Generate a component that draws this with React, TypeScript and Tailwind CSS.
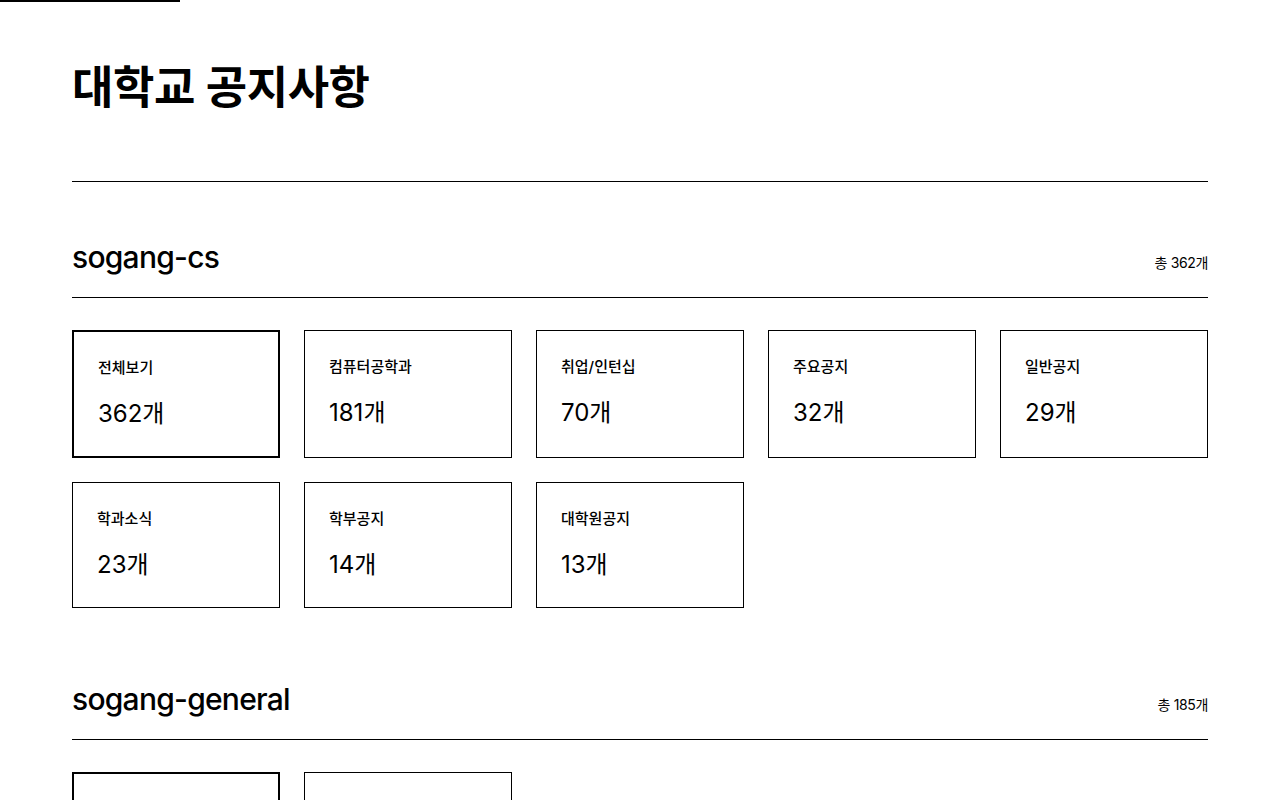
import React from "react";

type Category = { name: string; count: number };

type Source = { id: string; total: number; categories: Category[] };

const sources: Source[] = [
  {
    id: "sogang-cs",
    total: 362,
    categories: [
      { name: "전체보기", count: 362 },
      { name: "컴퓨터공학과", count: 181 },
      { name: "취업/인턴십", count: 70 },
      { name: "주요공지", count: 32 },
      { name: "일반공지", count: 29 },
      { name: "학과소식", count: 23 },
      { name: "학부공지", count: 14 },
      { name: "대학원공지", count: 13 },
    ],
  },
  {
    id: "sogang-general",
    total: 185,
    categories: [
      { name: "전체보기", count: 185 },
      { name: "학사공지", count: 96 },
    ],
  },
];

const font = {
  fontFamily: '"Inter", "Noto Sans CJK KR", sans-serif',
};

function CategoryCard({ cat, active }: { cat: Category; active: boolean }) {
  return (
    <button
      className={
        active
          ? "flex flex-col items-start border-2 border-black p-6 text-left text-black"
          : "flex flex-col items-start border border-black p-6 text-left text-black"
      }
    >
      <span className="text-[15px] leading-6 font-medium">{cat.name}</span>
      <span className="mt-4 text-2xl leading-9">{cat.count}개</span>
    </button>
  );
}

function SourceSection({ source }: { source: Source }) {
  return (
    <section>
      <div className="flex items-end justify-between border-b border-black pb-[22px]">
        <h2 className="text-3xl leading-9 font-medium tracking-tight">{source.id}</h2>
        <span className="text-sm leading-5 mb-0.5 tracking-tight">총 {source.total}개</span>
      </div>
      <div className="mt-8 grid grid-cols-5 gap-6">
        {source.categories.map((c, i) => (
          <CategoryCard key={c.name} cat={c} active={i === 0} />
        ))}
      </div>
    </section>
  );
}

export default function App() {
  return (
    <div className="min-h-screen bg-white text-black" style={font}>
      <div className="h-[2px] w-[180px] bg-black" />
      <main className="px-[72px]">
        <header className="border-b border-black pt-[58px] pb-[65px]">
          <h1 className="text-[45px] leading-[56px] font-semibold tracking-[-0.01em]">대학교 공지사항</h1>
        </header>
        <div className="flex flex-col gap-[73px] pt-[57px] pb-20">
          {sources.map((s) => (
            <SourceSection key={s.id} source={s} />
          ))}
        </div>
      </main>
    </div>
  );
}
